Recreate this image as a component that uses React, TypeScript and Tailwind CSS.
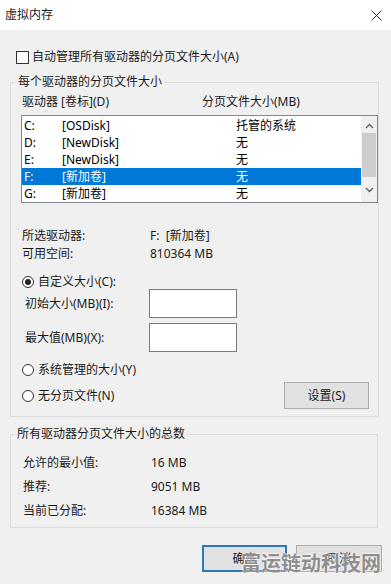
import React from "react";

const drives = [
  { letter: "C:", label: "[OSDisk]", size: "托管的系统" },
  { letter: "D:", label: "[NewDisk]", size: "无" },
  { letter: "E:", label: "[NewDisk]", size: "无" },
  { letter: "F:", label: "[新加卷]", size: "无", selected: true },
  { letter: "G:", label: "[新加卷]", size: "无" },
];

const totals = [
  { label: "允许的最小值:", value: "16 MB" },
  { label: "推荐:", value: "9051 MB" },
  { label: "当前已分配:", value: "16384 MB" },
];

function Radio({ checked = false }: { checked?: boolean }) {
  return (
    <span className="flex h-[12px] w-[12px] shrink-0 items-center justify-center rounded-full border border-[#333] bg-white">
      {checked && <span className="h-[6px] w-[6px] rounded-full bg-[#222]" />}
    </span>
  );
}

function Chevron({ up }: { up?: boolean }) {
  return (
    <svg width="9" height="6" viewBox="0 0 9 6" className="text-[#606060]">
      <path d={up ? "M1 5 L4.5 1.5 L8 5" : "M1 1 L4.5 4.5 L8 1"} fill="none" stroke="currentColor" strokeWidth="1.3" />
    </svg>
  );
}

export default function App() {
  return (
    <div className="relative h-[584px] w-[391px] overflow-hidden bg-[#f0f0f0] font-['Noto_Sans','Noto_Sans_CJK_SC',sans-serif] text-[12px] leading-[16px] text-[#1a1a1a]">
      {/* title bar */}
      <div className="flex h-[30px] items-center justify-between bg-white pl-[5px] pr-[9px]">
        <span>虚拟内存</span>
        <svg width="11" height="11" viewBox="0 0 11 11">
          <path d="M0.5 0.5 L10.5 10.5 M10.5 0.5 L0.5 10.5" stroke="#333" strokeWidth="1" />
        </svg>
      </div>

      <div className="ml-[16px] mt-[19px] flex h-[16px] items-center gap-[3px]">
        <span className="h-[13px] w-[13px] border border-[#333] bg-white" />
        <span>自动管理所有驱动器的分页文件大小(A)</span>
      </div>

      {/* per drive group */}
      <fieldset className="mx-[10px] mt-[9px] w-[368px] border border-[#dcdcdc] pb-[7px]">
        <legend className="ml-[5px] px-[2px]">每个驱动器的分页文件大小</legend>
        <div className="mt-[4px] flex h-[16px] pl-[11px]">
          <span className="w-[180px]">驱动器 [卷标](D)</span>
          <span>分页文件大小(MB)</span>
        </div>
        <div className="ml-[10px] mt-[5px] flex h-[88px] w-[357px] border border-[#828790] bg-white">
          <div className="flex-1 pt-[1px]">
            {drives.map((d) => (
              <div
                key={d.letter}
                className={`flex h-[17px] items-center pl-[2px] ${d.selected ? "bg-[#0078d7] text-white" : "text-black"}`}
              >
                <span className="w-[38px]">{d.letter}</span>
                <span className="w-[174px]">{d.label}</span>
                <span>{d.size}</span>
              </div>
            ))}
          </div>
          <div className="flex w-[16px] flex-col items-center bg-[#f0f0f0]">
            <div className="flex h-[17px] items-center pt-[2px]">
              <Chevron up />
            </div>
            <div className="h-[44px] w-[14px] bg-[#cdcdcd]" />
            <div className="flex flex-1 items-center">
              <Chevron />
            </div>
          </div>
        </div>

        <div className="mt-[24px] pl-[11px]">
          <div className="flex h-[18px] items-center">
            <span className="w-[128px]">所选驱动器:</span>
            <span>F:&nbsp;&nbsp;[新加卷]</span>
          </div>
          <div className="flex h-[18px] items-center">
            <span className="w-[128px]">可用空间:</span>
            <span>810364 MB</span>
          </div>
        </div>

        <div className="ml-[11px] mt-[11px] flex h-[15px] items-center gap-[4px]">
          <Radio checked />
          <span>自定义大小(C):</span>
        </div>
        <div className="flex h-[29px] items-center pl-[14px]">
          <span className="w-[124px]">初始大小(MB)(I):</span>
          <div className="h-[29px] w-[88px] border border-[#7a7a7a] bg-white" />
        </div>
        <div className="mt-[5px] flex h-[29px] items-center pl-[14px]">
          <span className="w-[124px]">最大值(MB)(X):</span>
          <div className="h-[29px] w-[88px] border border-[#7a7a7a] bg-white" />
        </div>
        <div className="ml-[11px] mt-[10px] flex h-[16px] items-center gap-[4px]">
          <Radio />
          <span>系统管理的大小(Y)</span>
        </div>
        <div className="mt-[4px] flex h-[27px] items-center justify-between pl-[11px] pr-[9px]">
          <div className="flex items-center gap-[4px]">
            <Radio />
            <span>无分页文件(N)</span>
          </div>
          <button className="flex h-[27px] w-[85px] items-center justify-center border border-[#adadad] bg-[#e1e1e1]">
            设置(S)
          </button>
        </div>
      </fieldset>

      {/* totals group */}
      <fieldset className="mx-[10px] mt-[9px] w-[368px] border border-[#dcdcdc] pb-[4px]">
        <legend className="ml-[5px] px-[1px]">所有驱动器分页文件大小的总数</legend>
        <div className="mt-[9px] pl-[12px]">
          {totals.map((t) => (
            <div key={t.label} className="flex h-[24px] items-center">
              <span className="w-[128px]">{t.label}</span>
              <span>{t.value}</span>
            </div>
          ))}
        </div>
      </fieldset>

      <div className="ml-[202px] mt-[17px] flex gap-[9px]">
        <button className="flex h-[27px] w-[85px] items-center justify-center border-2 border-[#2a78c0] bg-[#e1e1e1]">
          确定
        </button>
        <button className="flex h-[27px] w-[86px] items-center justify-center border border-[#adadad] bg-[#e1e1e1]">
          取消
        </button>
      </div>

      <div className="absolute left-[241px] top-[552px] text-[20px] font-bold leading-[24px] text-[#8f8f8f] [text-shadow:0_0_2px_#fff,0_0_2px_#fff]">
        富运链动科技网
      </div>
    </div>
  );
}
